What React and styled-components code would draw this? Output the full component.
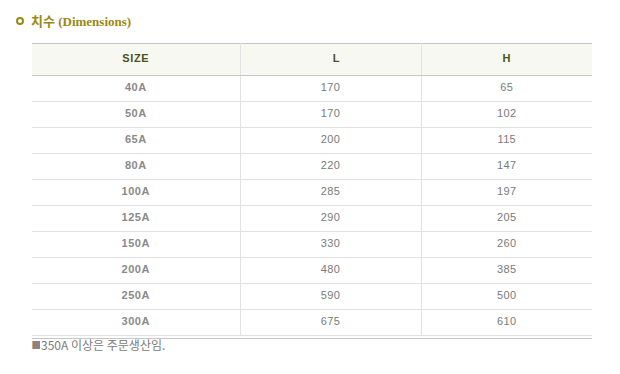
import React from "react";
import styled, { createGlobalStyle } from "styled-components";

const Global = createGlobalStyle`
  html, body { margin: 0; padding: 0; background: #fff; }
  body { font-family: "Liberation Sans", "Noto Sans CJK KR", sans-serif; }
`;

const Page = styled.div`
  width: 620px;
  height: 374px;
  padding: 12px 0 0 16px;
  box-sizing: border-box;
`;

const Title = styled.h2`
  display: flex;
  align-items: center;
  gap: 7px;
  margin: 0;
  height: 17px;
  font-family: "Liberation Serif", "Noto Sans CJK KR", serif;
  font-size: 13px;
  font-weight: bold;
  color: #9a8816;
`;

const Bullet = styled.span`
  width: 4px;
  height: 4px;
  border: 2px solid #9a8816;
  border-radius: 50%;
`;

const Wrap = styled.div`
  margin: 14px 0 0 16px;
  width: 560px;
`;

const Table = styled.table`
  width: 560px;
  border-collapse: collapse;
  table-layout: fixed;
  border-top: 1px solid #c6c6c6;
  border-bottom: 1px solid #e2e2e2;
`;

const Th = styled.th`
  height: 28px;
  padding: 0 0 3px ${(p) => (p.$shift ? "12px" : "0")};
  background: #f8f8f2;
  border-bottom: 1px solid #c6c6c6;
  border-left: ${(p) => (p.$first ? "none" : "1px solid #e2e2e2")};
  font-size: 11px;
  font-weight: bold;
  color: #4a5418;
  letter-spacing: 0.6px;
  text-align: center;
  vertical-align: middle;
`;

const Td = styled.td`
  height: 22px;
  padding: 0 0 3px;
  border-bottom: 1px solid #e2e2e2;
  border-left: ${(p) => (p.$first ? "none" : "1px solid #e2e2e2")};
  font-size: 11px;
  font-weight: ${(p) => (p.$bold ? "bold" : "normal")};
  color: ${(p) => (p.$bold ? "#8a8a8a" : "#7a7a7a")};
  letter-spacing: ${(p) => (p.$bold ? "0.5px" : "0.3px")};
  text-align: center;
  vertical-align: middle;
`;

const BottomRule = styled.div`
  margin-top: 2px;
  height: 1px;
  background: #c6c6c6;
`;

const Note = styled.p`
  display: flex;
  align-items: center;
  margin: -1px 0 0;
  font-family: "Noto Sans CJK KR", "Liberation Sans", sans-serif;
  font-size: 12px;
  line-height: 13px;
  color: #7a7a7a;
`;

const Square = styled.span`
  width: 7px;
  height: 8px;
  background: #858585;
  border-left: 1px solid #e8a070;
  margin-right: 1px;
`;

const rows = [
  ["40A", 170, 65],
  ["50A", 170, 102],
  ["65A", 200, 115],
  ["80A", 220, 147],
  ["100A", 285, 197],
  ["125A", 290, 205],
  ["150A", 330, 260],
  ["200A", 480, 385],
  ["250A", 590, 500],
  ["300A", 675, 610],
];

export default function App() {
  return (
    <>
      <Global />
      <Page>
        <Title>
          <Bullet />
          치수 (Dimensions)
        </Title>
        <Wrap>
          <Table>
            <colgroup>
              <col style={{ width: 208 }} />
              <col style={{ width: 181 }} />
              <col style={{ width: 171 }} />
            </colgroup>
            <thead>
              <tr>
                <Th $first>SIZE</Th>
                <Th $shift>L</Th>
                <Th>H</Th>
              </tr>
            </thead>
            <tbody>
              {rows.map(([s, l, h]) => (
                <tr key={s}>
                  <Td $first $bold>{s}</Td>
                  <Td>{l}</Td>
                  <Td>{h}</Td>
                </tr>
              ))}
            </tbody>
          </Table>
          <BottomRule />
          <Note>
            <Square />
            350A 이상은 주문생산임.
          </Note>
        </Wrap>
      </Page>
    </>
  );
}
